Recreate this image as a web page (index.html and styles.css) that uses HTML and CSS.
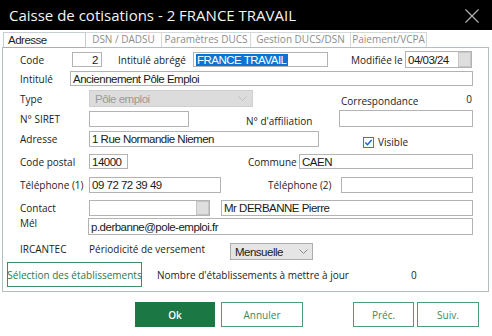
FILE: index.html
```html
<!DOCTYPE html>
<html lang="fr">
<head>
<meta charset="utf-8">
<title>Caisse de cotisations</title>
<link rel="stylesheet" href="styles.css">
</head>
<body>
<div class="win">
  <div class="titlebar">
    <span class="title">Caisse de cotisations - 2 FRANCE TRAVAIL</span>
    <svg class="close" width="14" height="14" viewBox="0 0 14 14"><path d="M0.5 0.5L13.5 13.5M13.5 0.5L0.5 13.5" stroke="#b5b5b5" stroke-width="1.1" fill="none"/></svg>
  </div>
  <div class="tabs">
    <div class="tab sel t1">Adresse</div>
    <div class="tab t2">DSN / DADSU</div>
    <div class="tab t3">Paramètres DUCS</div>
    <div class="tab t4">Gestion DUCS/DSN</div>
    <div class="tab t5">Paiement/VCPA</div>
  </div>
  <div class="panel">
    <div class="row r1">
      <span class="lbl w52">Code</span>
      <div class="fld f-code">2</div>
      <span class="lbl l-abr">Intitulé abrégé</span>
      <div class="fld f-abr"><span class="hl">FRANCE TRAVAIL</span></div>
      <span class="lbl l-mod">Modifiée le</span>
      <div class="fld f-date"><span class="ftext">04/03/24</span><span class="pick"></span></div>
    </div>
    <div class="row r2">
      <span class="lbl w50">Intitulé</span>
      <div class="fld f-int">Anciennement Pôle Emploi</div>
    </div>
    <div class="row r3">
      <span class="lbl w69">Type</span>
      <div class="sel-dis">Pôle emploi<svg class="chev" width="9" height="6" viewBox="0 0 9 6"><path d="M0.5 0.5L4.5 4.5L8.5 0.5" stroke="#bdbdbd" fill="none"/></svg></div>
      <span class="lbl l-corr">Correspondance</span>
      <span class="zero">0</span>
    </div>
    <div class="row r4">
      <span class="lbl w69">N° SIRET</span>
      <div class="fld f-siret"></div>
      <span class="lbl l-aff">N° d'affiliation</span>
      <div class="fld f-aff"></div>
    </div>
    <div class="row r5">
      <span class="lbl w69">Adresse</span>
      <div class="fld f-adr">1 Rue Normandie Niemen</div>
      <span class="cb"><svg width="11" height="11" viewBox="0 0 11 11"><rect x="0.5" y="0.5" width="10" height="10" fill="#fff" stroke="#3b78c4"/><path d="M2.3 5.6L4.4 7.7L8.7 3.1" stroke="#1f5fb4" stroke-width="1.4" fill="none"/></svg></span>
      <span class="lbl l-vis">Visible</span>
    </div>
    <div class="row r6">
      <span class="lbl w69">Code postal</span>
      <div class="fld f-cp">14000</div>
      <span class="lbl l-com">Commune</span>
      <div class="fld f-com">CAEN</div>
    </div>
    <div class="row r7">
      <span class="lbl w69">Téléphone (1)</span>
      <div class="fld f-tel">09 72 72 39 49</div>
      <span class="lbl l-tel2">Téléphone (2)</span>
      <div class="fld f-tel"></div>
    </div>
    <div class="row r8">
      <span class="lbl w69">Contact</span>
      <div class="fld f-cont"><span class="ftext"></span><span class="pick"></span></div>
      <div class="fld f-nom">Mr DERBANNE Pierre</div>
    </div>
    <div class="row r9">
      <span class="lbl w68">Mél</span>
      <div class="fld f-mel">p.derbanne@pole-emploi.fr</div>
    </div>
    <div class="row r10">
      <span class="lbl w69">IRCANTEC</span>
      <span class="lbl l-per">Périodicité de versement</span>
      <div class="sel">Mensuelle<svg class="chev" width="9" height="6" viewBox="0 0 9 6"><path d="M0.5 0.5L4.5 4.5L8.5 0.5" stroke="#8a8a8a" fill="none"/></svg></div>
    </div>
    <div class="row r11">
      <div class="btn-sel">Sélection des établissements</div>
      <span class="lbl l-nb">Nombre d'établissements à mettre à jour</span>
      <span class="lbl">0</span>
    </div>
  </div>
  <div class="actions">
    <div class="btn ok">Ok</div>
    <div class="btn annuler">Annuler</div>
    <div class="btn prec">Préc.</div>
    <div class="btn suiv">Suiv.</div>
  </div>
</div>
</body>
</html>
```
FILE: styles.css
```css
* { box-sizing: border-box; }
html, body { margin: 0; padding: 0; background: #fff; }
.win { width: 492px; height: 336px; overflow: hidden; font-family: "Open Sans", "Noto Sans", sans-serif; font-size: 10px; color: #1c1c1c; }

.titlebar { height: 30px; background: #000; display: flex; align-items: center; padding-left: 9px; }
.title { color: #f4f4f4; font-size: 15px; flex: 1; line-height: 30px; }
.close { margin-right: 13px; margin-top: 2px; }

.tabs { display: flex; margin-top: 2px; padding-left: 3px; height: 15px; }
.tab { height: 15px; border-top: 1px solid #d3d9da; border-right: 1px solid #d3d9da; color: #8c8c8c; text-align: center; line-height: 13px; font-size: 10px; white-space: nowrap; }
.tab.sel { color: #1e1e1e; border-left: 1px solid #c4cdcf; border-top-color: #c4cdcf; border-right-color: #c4cdcf; position: relative; background: #fff; height: 16px; z-index: 1; }
.t1 { width: 45px; }
.t2 { width: 76px; }
.t3 { width: 89px; }
.t4 { width: 100px; }
.t5 { width: 76px; }

.panel { margin-left: 2px; width: 487px; height: 245px; border: 1px solid #b4bec0; }

.row { display: flex; align-items: center; padding-left: 17px; }
.lbl { flex: none; white-space: nowrap; }
.w50 { width: 50px; }
.w52 { width: 52px; }
.w68 { width: 68px; }
.w69 { width: 69px; }

.fld { flex: none; border: 1px solid #b3b3b3; background: #fff; font-family: "Liberation Sans", Arial, sans-serif; font-size: 11.5px; letter-spacing: -0.5px; color: #1a1a1a; padding-left: 2px; white-space: nowrap; overflow: hidden; display: flex; align-items: center; }
.ftext { flex: 1; }
.pick { flex: none; width: 13px; height: 100%; background: #dedede; border: 1px solid #c6c6c6; }

.r1 { margin-top: 4px; height: 15px; }
.r1 .fld { height: 15px; }
.f-code { width: 30px; justify-content: flex-end; padding-right: 3px; }
.l-abr { margin-left: 16px; width: 75px; }
.f-abr { width: 135px; }
.hl { background: #0a74d6; color: #fff; padding: 0 1px; }
.l-mod { margin-left: 23px; width: 54px; }
.r1 .f-date { width: 67px; height: 17px; }

.r2 { margin-top: 4px; height: 15px; }
.f-int { width: 403px; height: 15px; }

.r3 { margin-top: 4px; height: 17px; padding-right: 16px; }
.sel-dis { flex: none; width: 164px; height: 17px; background: #dcdcdc; border: 1px solid #cfcfcf; color: #9a9a9a; font-family: "Liberation Sans", Arial, sans-serif; font-size: 11.5px; letter-spacing: -0.5px; padding-left: 5px; display: flex; align-items: center; justify-content: space-between; padding-right: 5px; }
.l-corr { margin-left: 88px; margin-top: 5px; }
.zero { margin-left: auto; margin-top: 1px; }

.r4 { margin-top: 3px; height: 17px; }
.f-siret { width: 100px; height: 16px; }
.l-aff { margin-left: 57px; width: 93px; align-self: flex-end; line-height: 10px; margin-bottom: 1px; }
.f-aff { width: 134px; height: 17px; }

.r5 { margin-top: 4px; height: 16px; }
.f-adr { width: 230px; height: 16px; }
.cb { margin-left: 44px; display: flex; margin-top: 6px; }
.l-vis { margin-left: 4px; margin-top: 6px; }

.r6 { margin-top: 7px; height: 15px; }
.f-cp { width: 39px; height: 15px; }
.l-com { margin-left: 120px; width: 51px; }
.f-com { width: 174px; height: 15px; }

.r7 { margin-top: 8px; height: 16px; }
.f-tel { width: 132px; height: 16px; }
.l-tel2 { margin-left: 47px; width: 73px; }

.r8 { margin-top: 7px; height: 16px; }
.f-cont { width: 121px; height: 16px; }
.f-nom { margin-left: 11px; width: 252px; height: 16px; }

.r9 { margin-top: 2px; height: 17px; }
.f-mel { width: 385px; height: 17px; }
.r9 .lbl { margin-top: -8px; }

.r10 { margin-top: 8px; height: 17px; }
.r10 .lbl { margin-top: -5px; }
.l-per { width: 141px; }
.sel { flex: none; width: 83px; height: 17px; background: #e5e5e5; border: 1px solid #adadad; font-family: "Liberation Sans", Arial, sans-serif; font-size: 11.5px; letter-spacing: -0.5px; color: #1a1a1a; padding-left: 4px; padding-right: 4px; display: flex; align-items: center; justify-content: space-between; }

.r11 { margin-top: 2px; height: 25px; padding-left: 4px; }
.btn-sel { flex: none; width: 135px; height: 25px; border: 1px solid #3f8d62; color: #2b7a4e; display: flex; align-items: center; justify-content: center; white-space: nowrap; }
.l-nb { margin-left: 15px; width: 254px; }

.actions { display: flex; margin-top: 10px; }
.btn { flex: none; height: 25px; border: 1px solid #4f9d74; color: #3a8a5e; display: flex; align-items: center; justify-content: center; background: #fff; }
.ok { margin-left: 135px; width: 80px; background: #1b7743; border-color: #1b7743; color: #fff; font-weight: 600; }
.annuler { margin-left: 6px; width: 82px; }
.prec { margin-left: 50px; width: 61px; }
.suiv { margin-left: 3px; width: 62px; }
```
